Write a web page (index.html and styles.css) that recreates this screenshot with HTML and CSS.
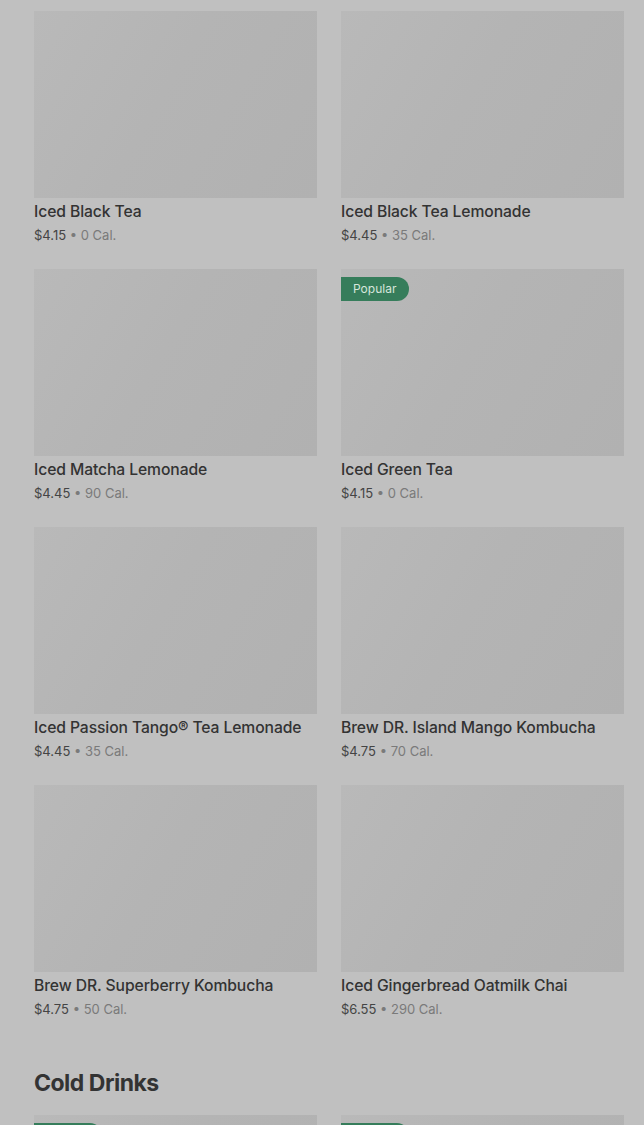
FILE: index.html
```html
<!DOCTYPE html>
<html lang="en">
<head>
  <meta charset="UTF-8" />
  <meta name="viewport" content="width=device-width, initial-scale=1.0"/>
  <title>Menu</title>
  <link rel="stylesheet" href="styles.css">
</head>
<body>
  <div class="menu">
    <div class="grid">
      <div class="item">
        <div class="thumb"></div>
        <div class="name">Iced Black Tea</div>
        <div class="meta"><span class="price">$4.15</span> • 0 Cal.</div>
      </div>
      <div class="item">
        <div class="thumb"></div>
        <div class="name">Iced Black Tea Lemonade</div>
        <div class="meta"><span class="price">$4.45</span> • 35 Cal.</div>
      </div>
      <div class="item">
        <div class="thumb"></div>
        <div class="name">Iced Matcha Lemonade</div>
        <div class="meta"><span class="price">$4.45</span> • 90 Cal.</div>
      </div>
      <div class="item">
        <div class="thumb"><span class="badge">Popular</span></div>
        <div class="name">Iced Green Tea</div>
        <div class="meta"><span class="price">$4.15</span> • 0 Cal.</div>
      </div>
      <div class="item">
        <div class="thumb"></div>
        <div class="name">Iced Passion Tango® Tea Lemonade</div>
        <div class="meta"><span class="price">$4.45</span> • 35 Cal.</div>
      </div>
      <div class="item">
        <div class="thumb"></div>
        <div class="name">Brew DR. Island Mango Kombucha</div>
        <div class="meta"><span class="price">$4.75</span> • 70 Cal.</div>
      </div>
      <div class="item">
        <div class="thumb"></div>
        <div class="name">Brew DR. Superberry Kombucha</div>
        <div class="meta"><span class="price">$4.75</span> • 50 Cal.</div>
      </div>
      <div class="item">
        <div class="thumb"></div>
        <div class="name">Iced Gingerbread Oatmilk Chai</div>
        <div class="meta"><span class="price">$6.55</span> • 290 Cal.</div>
      </div>
    </div>

    <h2 class="section-title">Cold Drinks</h2>
    <div class="grid">
      <div class="item">
        <div class="thumb"><span class="badge">Popular</span></div>
      </div>
      <div class="item">
        <div class="thumb"><span class="badge">Popular</span></div>
      </div>
    </div>
  </div>
</body>
</html>
```

FILE: styles.css
```css
* { box-sizing: border-box; margin: 0; padding: 0; }
body { font-family: Inter, "Noto Sans", Arial, sans-serif; background-color: #c0c0c0; color: #333; overflow: hidden; }
.menu { padding: 11px 20px 0 34px; }
.grid { display: grid; grid-template-columns: 283px 283px; column-gap: 24px; row-gap: 25px; }
.thumb { position: relative; height: 187px; background: linear-gradient(120deg, #b9b9b9 0%, #b4b4b4 45%, #b1b1b1 100%); }
.badge { position: absolute; top: 8px; left: 0; padding: 0 13px 0 12px; height: 24px; line-height: 24px; font-size: 12px; color: #d6e6dc; background-color: #367d5b; border-radius: 0 12px 12px 0; }
.name { margin-top: 4px; font-size: 15.7px; font-weight: 500; line-height: 20px; color: #333; letter-spacing: -0.1px; }
.meta { margin-top: 4px; font-size: 13px; line-height: 18px; color: #7a7a7a; }
.price { color: #444; }
.section-title { margin: 51px 0 18px; font-size: 23px; font-weight: 700; line-height: 28px; color: #333; letter-spacing: -0.5px; }
```
